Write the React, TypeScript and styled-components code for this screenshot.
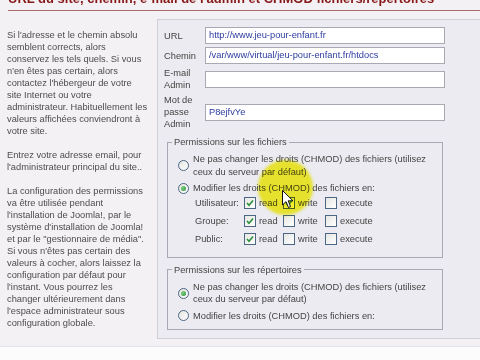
import React from "react";
import styled, { createGlobalStyle } from "styled-components";

const GlobalStyle = createGlobalStyle`
  body {
    margin: 0;
    background: #fcfcfd;
    font-family: "Liberation Sans", Arial, sans-serif;
  }
`;

const Page = styled.div`
  position: relative;
  width: 480px;
  height: 360px;
  overflow: hidden;
  background: #fcfcfd;
`;

const Frame = styled.div`
  height: 346px;
  background: #f4f1f4;
  border-bottom: 1px solid #e4e2e8;
  display: flex;
  flex-direction: column;
`;

const TitleStrip = styled.div`
  height: 7px;
  overflow: hidden;
  display: flex;
  align-items: flex-end;
  padding-left: 8px;
`;

const Title = styled.h1`
  margin: 0 0 2px 0;
  font-size: 13px;
  line-height: 13px;
  font-weight: bold;
  color: #861818;
  white-space: nowrap;
`;

const Rule = styled.div`
  height: 1px;
  margin: 3px 0 0 8px;
  background: #a86c6c;
`;

const Body = styled.div`
  display: flex;
  align-items: flex-start;
  margin-top: 8px;
`;

const Help = styled.div`
  width: 157px;
  box-sizing: border-box;
  padding: 10px 0 0 7px;
  font-size: 9.3px;
  line-height: 12px;
  color: #4d4d4d;
  white-space: nowrap;

  p {
    margin: 0 0 12px 0;
  }
`;

const Panel = styled.div`
  flex: 1;
  height: 320px;
  box-sizing: border-box;
  background: #ebebf1;
  border: 1px solid #d0d0d9;
  border-right: none;
  padding: 7px 0 0 6px;
  font-size: 9.3px;
  color: #454545;
`;

const FormGrid = styled.div`
  display: grid;
  grid-template-columns: 41px 240px;
  row-gap: 3px;
  align-items: center;
`;

const FieldLabel = styled.div`
  line-height: 12px;
`;

const TextInput = styled.div`
  height: 17px;
  box-sizing: border-box;
  border: 1px solid #a9a9b4;
  background: #ffffff;
  padding: 0 3px;
  line-height: 15px;
  color: #2c3ca0;
  white-space: nowrap;
  overflow: hidden;
`;

const Group = styled.fieldset<{ $top: number; $bottom: number }>`
  margin: ${(p) => p.$top}px 0 0 3px;
  width: 276px;
  box-sizing: border-box;
  border: 1px solid #a9a9b5;
  padding: 5px 0 ${(p) => p.$bottom}px 10px;

  legend {
    margin-left: -6px;
    padding: 0 2px;
    line-height: 12px;
    color: #454545;
  }
`;

const RadioRow = styled.div`
  display: flex;
  align-items: center;
  gap: 4px;
  line-height: 12.5px;
  white-space: nowrap;

  & + & {
    margin-top: 4px;
  }
`;

const RadioMark = styled.span<{ $on?: boolean }>`
  position: relative;
  flex-shrink: 0;
  width: 11px;
  height: 11px;
  box-sizing: border-box;
  border-radius: 50%;
  border: 1px solid #4b6783;
  background: linear-gradient(135deg, #e4e4e0, #ffffff);

  &::after {
    content: "";
    display: ${(p) => (p.$on ? "block" : "none")};
    position: absolute;
    left: 2px;
    top: 2px;
    width: 5px;
    height: 5px;
    border-radius: 50%;
    background: radial-gradient(circle at 35% 35%, #7fd07f, #2a8f3a);
  }
`;

const CheckGrid = styled.div`
  display: grid;
  grid-template-columns: 49px 39px 42px auto;
  grid-auto-rows: 18px;
  align-items: center;
  padding-left: 17px;
  margin-top: -1px;
`;

const CheckItem = styled.span`
  display: flex;
  align-items: center;
  gap: 3px;
`;

const Box = styled.span`
  display: inline-flex;
  align-items: center;
  justify-content: center;
  width: 12px;
  height: 12px;
  box-sizing: border-box;
  border: 1px solid #4b6783;
  background: linear-gradient(135deg, #e6e6e2, #ffffff);
`;

const Highlight = styled.div`
  position: absolute;
  left: 258px;
  top: 160px;
  width: 55px;
  height: 55px;
  border-radius: 50%;
  background: rgba(250, 244, 24, 0.9);
  mix-blend-mode: multiply;
  filter: blur(1.5px);
`;

const Cursor = styled.svg`
  position: absolute;
  left: 282px;
  top: 190px;
`;

function Check({ on }: { on: boolean }) {
  return (
    <Box>
      {on && (
        <svg width="8" height="8" viewBox="0 0 8 8">
          <path d="M1 4 L3 6.2 L7 1.5" fill="none" stroke="#2a8f3a" strokeWidth="1.6" />
        </svg>
      )}
    </Box>
  );
}

const perms = [
  { who: "Utilisateur:", r: true, w: true, x: false },
  { who: "Groupe:", r: true, w: false, x: false },
  { who: "Public:", r: true, w: false, x: false },
];

export default function App() {
  return (
    <Page>
      <GlobalStyle />
      <Frame>
        <TitleStrip>
          <Title>URL du site, chemin, e-mail de l'admin et CHMOD fichiers/répertoires</Title>
        </TitleStrip>
        <Rule />
        <Body>
          <Help>
            <p>
              Si l'adresse et le chemin absolu<br />
              semblent corrects, alors<br />
              conservez les tels quels. Si vous<br />
              n'en êtes pas certain, alors<br />
              contactez l'hébergeur de votre<br />
              site Internet ou votre<br />
              administrateur. Habituellement les<br />
              valeurs affichées conviendront à<br />
              votre site.
            </p>
            <p>
              Entrez votre adresse email, pour<br />
              l'administrateur principal du site..
            </p>
            <p>
              La configuration des permissions<br />
              va être utilisée pendant<br />
              l'installation de Joomla!, par le<br />
              système d'installation de Joomla!<br />
              et par le "gestionnaire de média".<br />
              Si vous n'êtes pas certain des<br />
              valeurs à cocher, alors laissez la<br />
              configuration par défaut pour<br />
              l'instant. Vous pourrez les<br />
              changer ultérieurement dans<br />
              l'espace administrateur sous<br />
              configuration globale.
            </p>
          </Help>
          <Panel>
            <FormGrid>
              <FieldLabel>URL</FieldLabel>
              <TextInput>http://www.jeu-pour-enfant.fr</TextInput>
              <FieldLabel>Chemin</FieldLabel>
              <TextInput>/var/www/virtual/jeu-pour-enfant.fr/htdocs</TextInput>
              <FieldLabel>
                E-mail<br />Admin
              </FieldLabel>
              <TextInput />
              <FieldLabel>
                Mot de<br />passe<br />Admin
              </FieldLabel>
              <TextInput>P8ejfvYe</TextInput>
            </FormGrid>

            <Group $top={6} $bottom={9}>
              <legend>Permissions sur les fichiers</legend>
              <RadioRow>
                <RadioMark />
                <span>
                  Ne pas changer les droits (CHMOD) des fichiers (utilisez<br />
                  ceux du serveur par défaut)
                </span>
              </RadioRow>
              <RadioRow>
                <RadioMark $on />
                <span>Modifier les droits (CHMOD) des fichiers en:</span>
              </RadioRow>
              <CheckGrid>
                {perms.map((p) => (
                  <React.Fragment key={p.who}>
                    <span>{p.who}</span>
                    <CheckItem>
                      <Check on={p.r} /> read
                    </CheckItem>
                    <CheckItem>
                      <Check on={p.w} /> write
                    </CheckItem>
                    <CheckItem>
                      <Check on={p.x} /> execute
                    </CheckItem>
                  </React.Fragment>
                ))}
              </CheckGrid>
            </Group>

            <Group $top={6} $bottom={7}>
              <legend>Permissions sur les répertoires</legend>
              <RadioRow>
                <RadioMark $on />
                <span>
                  Ne pas changer les droits (CHMOD) des fichiers (utilisez<br />
                  ceux du serveur par défaut)
                </span>
              </RadioRow>
              <RadioRow>
                <RadioMark />
                <span>Modifier les droits (CHMOD) des fichiers en:</span>
              </RadioRow>
            </Group>
          </Panel>
        </Body>
      </Frame>
      <Highlight />
      <Cursor width="12" height="19" viewBox="0 0 12 19">
        <path d="M0.5 0.5 L0.5 15 L4 11.6 L6.5 17.5 L8.6 16.6 L6.2 10.8 L11 10.8 Z" fill="#ffffff" stroke="#111111" strokeWidth="1" />
      </Cursor>
    </Page>
  );
}
